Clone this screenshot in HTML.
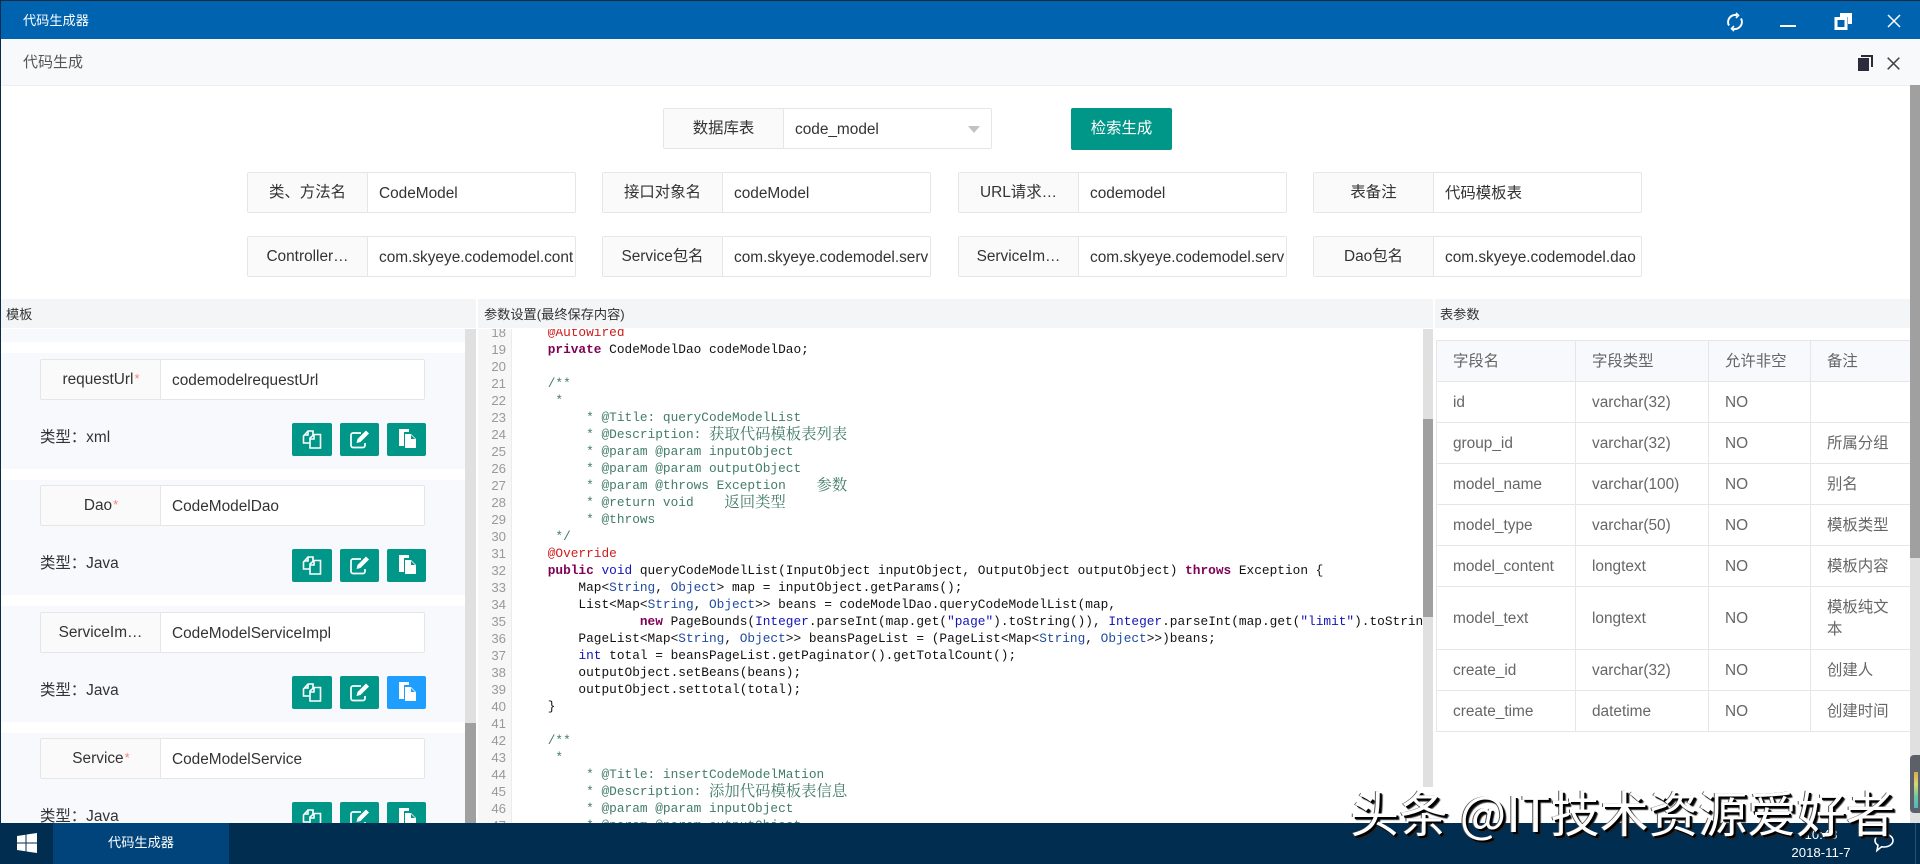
<!DOCTYPE html>
<html lang="zh">
<head>
<meta charset="utf-8">
<title>代码生成器</title>
<style>
html,body{margin:0;padding:0;width:1920px;height:864px;overflow:hidden;background:#fff}
body{position:relative;font-family:"Liberation Sans","Noto Sans CJK SC",sans-serif;font-size:15.4px;color:#333}
.a{position:absolute}
.top{left:0;top:0;width:1920px;height:39px;background:#0063af;border-top:1px solid #1c2c3c;box-sizing:border-box}
.lb{left:0;top:0;width:1px;height:823px;background:#0b2b4b;z-index:5}
.title{left:23px;top:12px;color:#fff;font-size:13.2px;line-height:18px}
.sub{left:0;top:39px;width:1920px;height:47px;background:#f8f9fa;border-bottom:1px solid #f0f0f0;box-sizing:border-box}
.subt{left:23px;top:52.5px;font-size:15px;line-height:20px;color:#555}
.f{position:absolute;width:329px;height:41px;box-sizing:border-box;border:1px solid #e6e6e6;border-radius:2px;background:#fff;overflow:hidden}
.f b{position:absolute;left:0;top:0;height:39px;line-height:40px;text-align:center;font-weight:400;background:#fafafa;border-right:1px solid #e6e6e6;box-sizing:border-box;width:120px}
.f i{position:absolute;left:131px;top:0;width:195px;overflow:hidden;line-height:41px;font-style:normal;white-space:nowrap}
.t2{width:385px}
.t2 b{width:120px}
.t2 em{color:#f58080;font-style:normal;font-size:13px;position:relative;top:-1px;left:1px}
.btn{left:1071px;top:108px;width:101px;height:42px;background:#009688;border-radius:2px;color:#fff;text-align:center;line-height:42px}
.ph{top:299px;height:29px;background:#f4f5f7;font-size:13.2px;line-height:31px;color:#333;box-sizing:border-box;padding-left:5px}
.item{left:1px;width:464px;height:116px;background:#f8f9fd}
.ib{position:absolute;height:33px;background:#009688;border-radius:2px;text-align:center}
.ib svg{display:block;margin:5px auto 0}
.ty{left:40px;line-height:22px;white-space:nowrap}
.gut{left:478px;top:329px;width:34px;height:494px;background:#f7f7f7;border-right:1px solid #ececec;box-sizing:border-box;overflow:hidden}
.gut div{position:absolute;right:5px;width:28px;text-align:right;font-size:13.2px;line-height:17px;color:#999}
.code{left:517px;top:329px;width:906px;height:494px;overflow:hidden;font-family:"Liberation Mono",monospace;font-size:12.8px;color:#111}
.l{position:absolute;left:0;height:17px;line-height:17px;white-space:pre}
.c{font-family:"Noto Serif CJK SC",serif;font-size:15.36px;line-height:0;position:relative;top:1px}
.m{color:#437c6a}
.k{color:#7f0055;font-weight:700}
.y{color:#1414b8}
.s{color:#1f4a9f}
.an{color:#d01c1c}
table{position:absolute;left:1436px;top:340px;width:474px;border-collapse:collapse;table-layout:fixed;color:#666}
td{border:1px solid #e6e6e6;padding:2px 17px 0 16px;height:41px;box-sizing:border-box;line-height:22px;font-size:15.4px;word-break:break-all}
tr:first-child td{background:#f8f9fd}
.bar{left:0;top:823px;width:1920px;height:41px;background:#002d50;z-index:10}
.act{left:53px;top:0;width:176px;height:41px;background:#00447b;color:#fff;text-align:center;line-height:40px;font-size:13.2px}
.clk{color:#fff;font-size:13.2px;line-height:16px;text-align:center;width:80px;left:1781px}
.wm{left:1350px;top:777px;z-index:20;font-family:"Noto Sans CJK SC",sans-serif;font-size:49px;line-height:70px;color:#fff;white-space:pre;letter-spacing:.25px;text-shadow:2px 2px 0 #000,3px 3px 1px #222,-1px 0 0 #555}
</style>
</head>
<body>
<div class="a lb"></div>
<div class="a top"></div>
<div class="a title">代码生成器</div>
<svg class="a" style="left:1725px;top:12px" width="20" height="20" viewBox="0 0 20 20" fill="none" stroke="#fff" stroke-width="2"><path d="M4 13.5A7 7 0 0 1 12 3.3"/><path d="M16 6.5A7 7 0 0 1 8 16.7"/><path d="M11 1l2.5 2.4L11 6" stroke-width="1.6"/><path d="M9 14l-2.5 2.6L9 19" stroke-width="1.6"/></svg>
<div class="a" style="left:1780px;top:25px;width:16px;height:2px;background:#fff"></div>
<svg class="a" style="left:1834px;top:12px" width="19" height="19" viewBox="0 0 19 19"><path fill="#fff" d="M6 1h12v11h-4V5H6z"/><rect x="2" y="6.5" width="10" height="10" fill="none" stroke="#fff" stroke-width="3"/></svg>
<svg class="a" style="left:1887px;top:14px" width="14" height="14" viewBox="0 0 14 14" stroke="#fff" stroke-width="1.5"><path d="M1 1l12 12M13 1L1 13"/></svg>

<div class="a sub"></div>
<div class="a subt">代码生成</div>
<svg class="a" style="left:1857px;top:54px" width="17" height="18" viewBox="0 0 17 18"><path fill="#2b2b3a" d="M4 1h12v12h-2V3H4z"/><rect x="1" y="4" width="11" height="13" fill="#2b2b3a"/></svg>
<svg class="a" style="left:1887px;top:57px" width="13" height="13" viewBox="0 0 13 13" stroke="#444" stroke-width="1.5"><path d="M.7.7l11.6 11.6M12.3.7L.7 12.3"/></svg>

<div class="f" style="left:663px;top:108px"><b>数据库表</b><i>code_model</i></div>
<div class="a" style="left:968px;top:126px;width:0;height:0;border-left:6.5px solid transparent;border-right:6.5px solid transparent;border-top:7px solid #c2c2c2"></div>
<div class="a btn">检索生成</div>

<div class="f" style="left:247px;top:172px"><b>类、方法名</b><i>CodeModel</i></div>
<div class="f" style="left:602px;top:172px"><b>接口对象名</b><i>codeModel</i></div>
<div class="f" style="left:958px;top:172px"><b>URL请求…</b><i>codemodel</i></div>
<div class="f" style="left:1313px;top:172px"><b>表备注</b><i>代码模板表</i></div>

<div class="f" style="left:247px;top:236px"><b>Controller…</b><i>com.skyeye.codemodel.controller</i></div>
<div class="f" style="left:602px;top:236px"><b>Service包名</b><i>com.skyeye.codemodel.service</i></div>
<div class="f" style="left:958px;top:236px"><b>ServiceIm…</b><i>com.skyeye.codemodel.service.impl</i></div>
<div class="f" style="left:1313px;top:236px"><b>Dao包名</b><i>com.skyeye.codemodel.dao</i></div>

<div class="a ph" style="left:1px;width:475px">模板</div>
<div class="a ph" style="left:478px;width:955px;padding-left:6px">参数设置(最终保存内容)</div>
<div class="a ph" style="left:1435px;width:475px">表参数</div>

<!-- left panel -->
<div class="a item" style="top:329px;height:13px"></div>
<div class="a item" style="top:353px"></div>
<div class="a item" style="top:480px;height:115px"></div>
<div class="a item" style="top:606px"></div>
<div class="a item" style="top:733px;height:90px"></div>
<div class="a" style="left:465px;top:329px;width:11px;height:494px;background:#e0e0e0"></div>
<div class="a" style="left:465px;top:723px;width:11px;height:100px;background:#a0a0a0"></div>

<div class="f t2" style="left:40px;top:359px"><b>requestUrl<em>*</em></b><i>codemodelrequestUrl</i></div>
<div class="a ty" style="top:427px">类型：xml</div>
<div class="f t2" style="left:40px;top:485px"><b>Dao<em>*</em></b><i>CodeModelDao</i></div>
<div class="a ty" style="top:553px">类型：Java</div>
<div class="f t2" style="left:40px;top:612px"><b>ServiceIm…</b><i>CodeModelServiceImpl</i></div>
<div class="a ty" style="top:680px">类型：Java</div>
<div class="f t2" style="left:40px;top:738px"><b>Service<em>*</em></b><i>CodeModelService</i></div>
<div class="a ty" style="top:806px">类型：Java</div>

<svg width="0" height="0" style="position:absolute"><defs>
<symbol id="i1" viewBox="0 0 22 22"><g fill="none" stroke="#fff" stroke-width="1.6"><path d="M9 15H2.5V8L7 3h5v4"/><path d="M7 3v4H3"/><path d="M9 18V10l4-3.500h6.500V20H9z"/><path d="M13 7v4H9"/></g></symbol>
<symbol id="i2" viewBox="0 0 22 22"><path fill="none" stroke="#fff" stroke-width="1.7" d="M16 15v2.500a2 2 0 0 1-2 2H4a2 2 0 0 1-2-2V7a2 2 0 0 1 2-2h8"/><path fill="#fff" d="M7.500 15l1-4L17 2.500l3 3L11.500 14z"/></symbol>
<symbol id="i3" viewBox="0 0 22 22"><path fill="#fff" d="M3 1h10v3H8v14H3z"/><path fill="#fff" d="M9 6h6l5 5v9H9z"/><path fill="#009688" d="M15 7v4h4z"/></symbol>
<symbol id="i4" viewBox="0 0 22 22"><path fill="#fff" d="M3 1h10v3H8v14H3z"/><path fill="#fff" d="M9 6h6l5 5v9H9z"/><path fill="#1e9fff" d="M15 7v4h4z"/></symbol>
</defs></svg>

<div class="ib a" style="left:292px;top:423px;width:40px"><svg width="22" height="22"><use href="#i1"/></svg></div>
<div class="ib a" style="left:340px;top:423px;width:39px"><svg width="22" height="22"><use href="#i2"/></svg></div>
<div class="ib a" style="left:387px;top:423px;width:39px"><svg width="22" height="22"><use href="#i3"/></svg></div>
<div class="ib a" style="left:292px;top:549px;width:40px"><svg width="22" height="22"><use href="#i1"/></svg></div>
<div class="ib a" style="left:340px;top:549px;width:39px"><svg width="22" height="22"><use href="#i2"/></svg></div>
<div class="ib a" style="left:387px;top:549px;width:39px"><svg width="22" height="22"><use href="#i3"/></svg></div>
<div class="ib a" style="left:292px;top:676px;width:40px"><svg width="22" height="22"><use href="#i1"/></svg></div>
<div class="ib a" style="left:340px;top:676px;width:39px"><svg width="22" height="22"><use href="#i2"/></svg></div>
<div class="ib a" style="left:387px;top:676px;width:39px;background:#1e9fff"><svg width="22" height="22"><use href="#i4"/></svg></div>
<div class="ib a" style="left:292px;top:802px;width:40px"><svg width="22" height="22"><use href="#i1"/></svg></div>
<div class="ib a" style="left:340px;top:802px;width:39px"><svg width="22" height="22"><use href="#i2"/></svg></div>
<div class="ib a" style="left:387px;top:802px;width:39px"><svg width="22" height="22"><use href="#i3"/></svg></div>

<!-- gutter -->
<div class="a gut">
<div style="top:-5px">18</div><div style="top:12px">19</div><div style="top:29px">20</div><div style="top:46px">21</div><div style="top:63px">22</div><div style="top:80px">23</div><div style="top:97px">24</div><div style="top:114px">25</div><div style="top:131px">26</div><div style="top:148px">27</div><div style="top:165px">28</div><div style="top:182px">29</div><div style="top:199px">30</div><div style="top:216px">31</div><div style="top:233px">32</div><div style="top:250px">33</div><div style="top:267px">34</div><div style="top:284px">35</div><div style="top:301px">36</div><div style="top:318px">37</div><div style="top:335px">38</div><div style="top:352px">39</div><div style="top:369px">40</div><div style="top:386px">41</div><div style="top:403px">42</div><div style="top:420px">43</div><div style="top:437px">44</div><div style="top:454px">45</div><div style="top:471px">46</div><div style="top:488px">47</div>
</div>

<!-- code -->
<div class="a code">
<div class="l an" style="top:-5px">    @Autowired</div>
<div class="l" style="top:12px">    <span class="k">private</span> CodeModelDao codeModelDao;</div>
<div class="l m" style="top:46px">    /**</div>
<div class="l m" style="top:63px">     *</div>
<div class="l m" style="top:80px">         * @Title: queryCodeModelList</div>
<div class="l m" style="top:97px">         * @Description: <span class="c">获取代码模板表列表</span></div>
<div class="l m" style="top:114px">         * @param @param inputObject</div>
<div class="l m" style="top:131px">         * @param @param outputObject</div>
<div class="l m" style="top:148px">         * @param @throws Exception    <span class="c">参数</span></div>
<div class="l m" style="top:165px">         * @return void    <span class="c">返回类型</span></div>
<div class="l m" style="top:182px">         * @throws</div>
<div class="l m" style="top:199px">     */</div>
<div class="l an" style="top:216px">    @Override</div>
<div class="l" style="top:233px">    <span class="k">public</span> <span class="y">void</span> queryCodeModelList(InputObject inputObject, OutputObject outputObject) <span class="k">throws</span> Exception {</div>
<div class="l" style="top:250px">        Map&lt;<span class="s">String</span>, <span class="s">Object</span>&gt; map = inputObject.getParams();</div>
<div class="l" style="top:267px">        List&lt;Map&lt;<span class="s">String</span>, <span class="s">Object</span>&gt;&gt; beans = codeModelDao.queryCodeModelList(map,</div>
<div class="l" style="top:284px">                <span class="k">new</span> PageBounds(<span class="y">Integer</span>.parseInt(map.get(<span class="y">"page"</span>).toString()), <span class="y">Integer</span>.parseInt(map.get(<span class="y">"limit"</span>).toString()));</div>
<div class="l" style="top:301px">        PageList&lt;Map&lt;<span class="s">String</span>, <span class="s">Object</span>&gt;&gt; beansPageList = (PageList&lt;Map&lt;<span class="s">String</span>, <span class="s">Object</span>&gt;&gt;)beans;</div>
<div class="l" style="top:318px">        <span class="y">int</span> total = beansPageList.getPaginator().getTotalCount();</div>
<div class="l" style="top:335px">        outputObject.setBeans(beans);</div>
<div class="l" style="top:352px">        outputObject.settotal(total);</div>
<div class="l" style="top:369px">    }</div>
<div class="l m" style="top:403px">    /**</div>
<div class="l m" style="top:420px">     *</div>
<div class="l m" style="top:437px">         * @Title: insertCodeModelMation</div>
<div class="l m" style="top:454px">         * @Description: <span class="c">添加代码模板表信息</span></div>
<div class="l m" style="top:471px">         * @param @param inputObject</div>
<div class="l m" style="top:488px">         * @param @param outputObject</div>
</div>
<div class="a" style="left:1423px;top:329px;width:10px;height:458px;background:#e0e0e0"></div>
<div class="a" style="left:1423px;top:419px;width:10px;height:198px;background:#a0a0a0"></div>

<!-- table -->
<table>
<colgroup><col style="width:139px"><col style="width:133px"><col style="width:102px"><col style="width:100px"></colgroup>
<tr><td>字段名</td><td>字段类型</td><td>允许非空</td><td>备注</td></tr>
<tr><td>id</td><td>varchar(32)</td><td>NO</td><td></td></tr>
<tr><td>group_id</td><td>varchar(32)</td><td>NO</td><td>所属分组</td></tr>
<tr><td>model_name</td><td>varchar(100)</td><td>NO</td><td>别名</td></tr>
<tr><td>model_type</td><td>varchar(50)</td><td>NO</td><td>模板类型</td></tr>
<tr><td>model_content</td><td>longtext</td><td>NO</td><td>模板内容</td></tr>
<tr><td style="height:63px">model_text</td><td>longtext</td><td>NO</td><td>模板纯文本</td></tr>
<tr><td>create_id</td><td>varchar(32)</td><td>NO</td><td>创建人</td></tr>
<tr><td>create_time</td><td>datetime</td><td>NO</td><td>创建时间</td></tr>
</table>

<!-- right scrollbar -->
<div class="a" style="left:1910px;top:85px;width:10px;height:738px;background:#e0e0e0"></div>
<div class="a" style="left:1910px;top:85px;width:10px;height:473px;background:#a0a0a0"></div>
<div class="a" style="left:1910px;top:755px;width:10px;height:58px;background:#5c6068;border-radius:4px 0 0 4px"></div>
<div class="a" style="left:1914px;top:772px;width:4px;height:36px;background:linear-gradient(#d8a850,#d8d870,#70c8a0,#50b8c0)"></div>

<!-- taskbar -->
<div class="a bar">
<svg class="a" style="left:17px;top:10px" width="20" height="20" viewBox="0 0 20 20" fill="#fff"><path d="M0 3l8.500-1.300v7.800H0zM9.500 1.500L20 0v9.500H9.500zM0 10.500h8.500v7.800L0 17zM9.500 10.500H20V20L9.500 18.500z"/></svg>
<div class="a act">代码生成器</div>
<div class="a clk" style="top:4px">10:48</div>
<div class="a clk" style="top:22px">2018-11-7</div>
<svg class="a" style="left:1873px;top:9px" width="22" height="21" viewBox="0 0 22 21" fill="none" stroke="#fff" stroke-width="1.6"><path d="M11 2c5 0 9 2.800 9 6.500S16 15 11 15c-1 0-1.500 0-2.500-.2L4 18.500l1-5.300C3 12 2 10.300 2 8.500 2 4.800 6 2 11 2z"/></svg>
<div class="a" style="left:1915px;top:0;width:1px;height:41px;background:#2a5070"></div>
</div>

<div class="a wm">头条 @IT技术资源爱好者</div>
</body>
</html>
